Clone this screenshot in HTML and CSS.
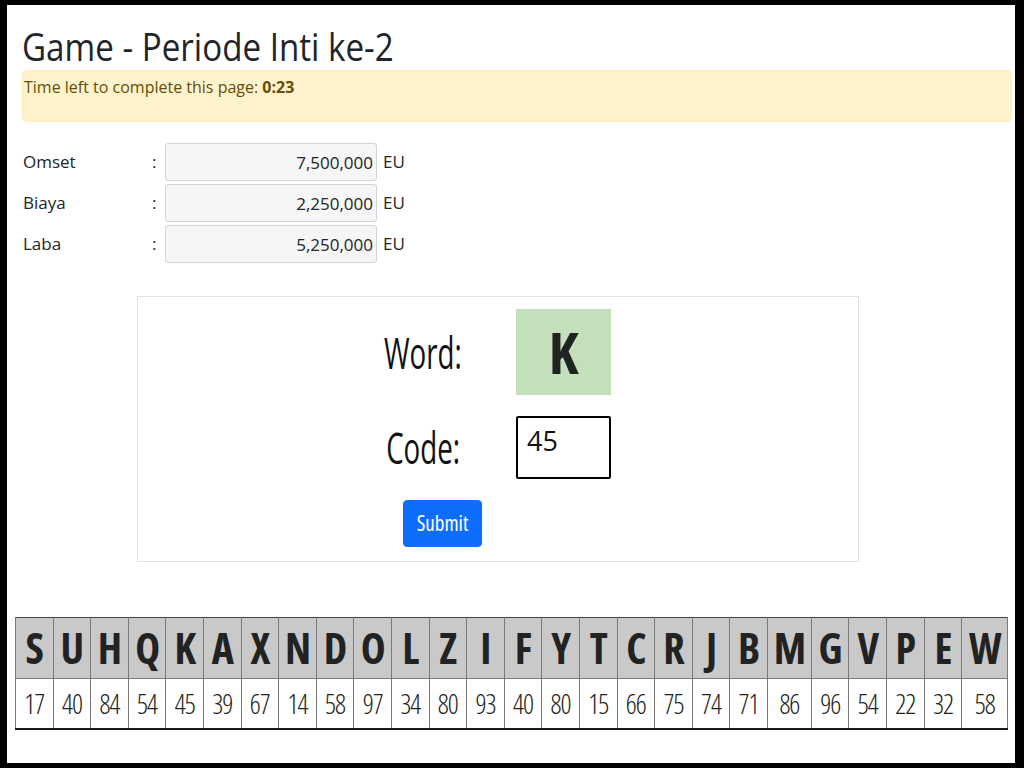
FILE: index.html
```html
<!DOCTYPE html>
<html lang="id">
<head>
<meta charset="utf-8">
<title>Game - Periode Inti ke-2</title>
<link rel="stylesheet" href="styles.css">
</head>
<body>
<div class="page">
  <h1 class="title">Game - Periode Inti ke-2</h1>
  <div class="alert">Time left to complete this page: <strong>0:23</strong></div>

  <div class="fin">
    <div class="fin-label">Omset</div><div class="fin-colon">:</div><div class="fin-input">7,500,000</div><div class="fin-unit">EU</div>
    <div class="fin-label">Biaya</div><div class="fin-colon">:</div><div class="fin-input">2,250,000</div><div class="fin-unit">EU</div>
    <div class="fin-label">Laba</div><div class="fin-colon">:</div><div class="fin-input">5,250,000</div><div class="fin-unit">EU</div>
  </div>

  <div class="card">
    <div class="game">
      <div class="g-label">Word:</div>
      <div class="word-box">K</div>
      <div class="g-label">Code:</div>
      <div class="code-box">45</div>
      <button class="btn" type="button">Submit</button>
    </div>
  </div>

  <table class="codes">
    <thead>
      <tr>
        <th>S</th><th>U</th><th>H</th><th>Q</th><th>K</th><th>A</th><th>X</th><th>N</th><th>D</th><th>O</th><th>L</th><th>Z</th><th>I</th><th>F</th><th>Y</th><th>T</th><th>C</th><th>R</th><th>J</th><th>B</th><th class="wide-m">M</th><th>G</th><th>V</th><th>P</th><th>E</th><th class="wide-w">W</th>
      </tr>
    </thead>
    <tbody>
      <tr>
        <td>17</td><td>40</td><td>84</td><td>54</td><td>45</td><td>39</td><td>67</td><td>14</td><td>58</td><td>97</td><td>34</td><td>80</td><td>93</td><td>40</td><td>80</td><td>15</td><td>66</td><td>75</td><td>74</td><td>71</td><td>86</td><td>96</td><td>54</td><td>22</td><td>32</td><td>58</td>
      </tr>
    </tbody>
  </table>
</div>
</body>
</html>
```

FILE: styles.css
```css
* { box-sizing: border-box; }

html, body { height: 100%; }

body {
  margin: 0;
  background: #000;
  padding: 5px 9px 5px 7px;
  font-family: "Open Sans", "Noto Sans", sans-serif;
  font-stretch: 75%;
  color: #212529;
}

.page {
  background: #fff;
  height: 758px;
  padding: 19px 3px 0 15px;
  overflow: hidden;
}

.title {
  margin: 0;
  font-size: 39px;
  font-weight: 500;
  font-stretch: 100%;
  line-height: 1.15;
  color: #212529;
  transform: scaleX(0.85);
  transform-origin: left center;
}

.alert {
  margin-top: 1px;
  height: 52px;
  background: #fff3cd;
  border: 1px solid #ffecb5;
  border-radius: 5px;
  color: #664d03;
  font-size: 16px;
  font-stretch: 100%;
  padding: 5px 0 0 1px;
}

.alert strong { font-weight: 700; }

.fin {
  margin-top: 21px;
  display: grid;
  grid-template-columns: 130px 13px 212px auto;
  column-gap: 0;
  row-gap: 3px;
  align-items: center;
  font-size: 17px;
  font-stretch: 100%;
  color: #212529;
}

.fin-label { padding-left: 1px; }

.fin-input {
  height: 38px;
  border: 1px solid #ced4da;
  border-radius: 3px;
  background: #f6f6f6;
  text-align: right;
  padding: 7px 3px 0 0;
}

.fin-unit { padding-left: 6px; }

.card {
  margin: 33px 0 0 115px;
  width: 722px;
  height: 266px;
  border: 1px solid #e2e2e2;
  padding-top: 12px;
}

.game {
  display: grid;
  grid-template-columns: 124px 95px;
  column-gap: 54px;
  row-gap: 21px;
  padding-left: 200px;
  align-items: center;
}

.g-label {
  font-size: 44px;
  font-weight: 400;
  font-stretch: 100%;
  color: #111;
  text-align: right;
  padding-right: 3px;
  transform: scaleX(0.63);
  transform-origin: right center;
}

.word-box {
  height: 86px;
  background: #c4dfbc;
  color: #1f2420;
  font-size: 58px;
  font-weight: 700;
  display: flex;
  align-items: center;
  justify-content: center;
}

.code-box {
  height: 63px;
  border: 2px solid #000;
  border-radius: 2px;
  font-size: 27px;
  font-stretch: 100%;
  color: #111;
  padding: 7px 0 0 9px;
  line-height: 1.2;
}

.btn {
  grid-column: 1;
  justify-self: start;
  margin-left: 65px;
  width: 79px;
  height: 47px;
  background: #0d6efd;
  border: 1px solid #0d6efd;
  border-radius: 4px;
  color: #fff;
  font-family: inherit;
  font-stretch: 75%;
  font-size: 21px;
  padding: 0;
}

.codes {
  margin: 55px 0 0 -7px;
  width: 993px;
  table-layout: fixed;
  border-collapse: collapse;
  border-top: 1px solid #444;
  border-bottom: 2px solid #1a1a1a;
}

.codes th, .codes td {
  border-left: 1px solid #7a7a7a;
  border-right: 1px solid #7a7a7a;
  text-align: center;
  padding: 0;
}

.codes th {
  width: 37.6px;
  height: 61px;
  background: #c9c9c9;
  font-size: 42px;
  font-weight: 700;
  letter-spacing: -1px;
  color: #222;
  border-bottom: 1px solid #7a7a7a;
}

.codes th.wide-m { width: 44px; }
.codes th.wide-w { width: 46px; }

.codes td {
  height: 51px;
  font-size: 27px;
  font-weight: 300;
  letter-spacing: -1px;
  color: #222;
}
```
